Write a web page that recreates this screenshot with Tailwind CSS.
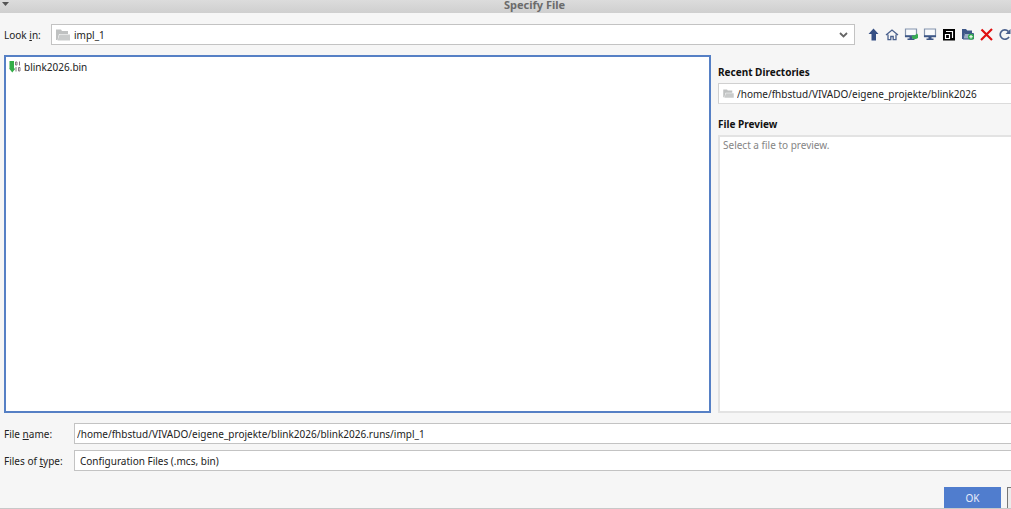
<!DOCTYPE html>
<html lang="en">
<head>
<meta charset="utf-8">
<title>Specify File</title>
<script src="https://cdn.jsdelivr.net/npm/@tailwindcss/browser@4"></script>
</head>
<body class="flex h-screen flex-col overflow-hidden border-b border-[#c8c8c8] bg-[#f6f6f6] font-['Noto_Sans',sans-serif] text-[10px] leading-4 text-[#222]">
  <header class="flex h-[13px] shrink-0 items-start bg-linear-to-b from-[#dcdcdc] to-[#cfcfcf]">
    <button aria-label="Window menu" class="h-2 w-[58px] shrink-0">
      <svg class="ml-[2px] h-2 w-2" viewBox="0 0 8 8"><path d="M0 2h7L3.500 6z" fill="#555"/></svg>
    </button>
    <h1 class="flex-1 text-center text-[11px] leading-[9px] font-bold text-[#6b6b6b]">Specify File</h1>
  </header>

  <div class="mt-[11px] flex h-[21px] shrink-0 items-center pl-1">
    <label for="look" class="w-[47px] shrink-0 whitespace-nowrap">Look <u>i</u>n:</label>
    <div class="grid h-full flex-1 items-center">
      <select id="look" class="col-start-1 row-start-1 h-full w-full appearance-none border border-[#c3c3c3] bg-white pl-[22px]">
        <option>impl_1</option>
      </select>
      <svg class="pointer-events-none col-start-1 row-start-1 ml-[5px] h-3 w-[14px]" viewBox="0 0 14 12"><path d="M0 .500h5l1 1.500h6V5H3L1.500 11H0z" fill="#bfc1c1"/><path d="M3.500 5.500H14V11.500H1.500z" fill="#c9cbcb"/></svg>
      <svg class="pointer-events-none col-start-1 row-start-1 mr-[7px] h-[6px] w-[9px] justify-self-end" viewBox="0 0 9 6"><path d="M1 1l3.500 3.500L8 1" fill="none" stroke="#666" stroke-width="1.800"/></svg>
    </div>
    <nav aria-label="Folder tools" class="-mr-[2px] ml-[11px] flex shrink-0 gap-[5px]">
      <button aria-label="Up one level"><svg class="h-[14px] w-[14px]" viewBox="0 0 14 14"><path d="M7.500 .500L12.500 6H10v6.500H5.500V6H2.500z" fill="#354f84"/></svg></button>
      <button aria-label="Home"><svg class="h-[14px] w-[14px]" viewBox="0 0 14 14"><path d="M1 7l6-5L13 7M3 6.500v5.200h2.800V8.500h2.400v3.200H11V6.500" fill="none" stroke="#4a608d" stroke-width="1.300"/></svg></button>
      <button aria-label="Desktop"><svg class="h-[14px] w-[14px]" viewBox="0 0 14 14"><path d="M1.500 1h11v7.300h-11z" fill="#f8fafc" stroke="#8494ad" stroke-width="1.200"/><path d="M1 7.300h12v2H1zM5.500 9h3v2h-3zM3.500 10.500h7V12h-7z" fill="#3d5787"/><path d="M7.500 8.500L9 7l1.200 1L13 5.500l1 1.200v3.300L12 11H9z" fill="#36ad52"/></svg></button>
      <button aria-label="Computer"><svg class="h-[14px] w-[14px]" viewBox="0 0 14 14"><path d="M1.500 1h11v7.300h-11z" fill="#f8fafc" stroke="#8494ad" stroke-width="1.200"/><path d="M1 7.300h12v2H1zM5.500 9h3v2h-3zM3.500 10.500h7V12h-7z" fill="#3d5787"/></svg></button>
      <button aria-label="Project directory"><svg class="h-[14px] w-[14px]" viewBox="0 0 14 14"><path d="M1 1h12v11.500H1z" fill="#000"/><path d="M4 3.500h6.500V10M3.500 10.500v-4H7.500v4z" fill="none" stroke="#fff" stroke-width="1.200"/></svg></button>
      <button aria-label="New folder"><svg class="h-[14px] w-[14px]" viewBox="0 0 14 14"><path d="M1 1h4l1.200 1.500H11V5H3.500L2 11H1z" fill="#3d5787"/><path d="M3.500 5.500h9v5.500H2z" fill="#9cacc4" stroke="#3d5787"/><circle cx="10" cy="8.800" r="3" fill="#2fab4d"/><path d="M10 7v3.600M8.200 8.800h3.600" stroke="#fff" stroke-width="1.100"/></svg></button>
      <button aria-label="Delete"><svg class="h-[14px] w-[14px]" viewBox="0 0 14 14"><path d="M1.500 1.500L12 12M12 1L1 12" stroke="#e01010" stroke-width="2.200"/></svg></button>
      <button aria-label="Refresh"><svg class="h-[14px] w-[14px]" viewBox="0 0 14 14"><path d="M9.300 3.300A4.700 4.700 0 1 0 10 8.800" fill="none" stroke="#4a608d" stroke-width="1.700"/><path d="M11.500 1v5H6.500z" fill="#4a608d"/></svg></button>
    </nav>
  </div>

  <main class="mt-[10px] flex min-h-0 flex-1 gap-[7px] pl-1">
    <ul aria-label="Files" class="flex-1 border-2 border-[#5680c5] bg-white px-[3px] py-[2px]">
      <li class="flex items-center gap-[3px]">
        <svg class="h-3 w-3" viewBox="0 0 12 12"><path d="M.5 0H5v7.500h1.500L3.300 11.500 0 7.500h.5z" fill="#35ad48"/><path d="M6.500 1h1.500v3H6.500zM10.500 .500v4M7 6v4.500M9.500 6.500h1.500v3.500H9.500z" fill="none" stroke="#7a6975" stroke-width=".9"/></svg>
        <span>blink2026.bin</span>
      </li>
    </ul>
    <aside class="flex w-[293px] shrink-0 flex-col">
      <h2 class="mt-[9px] font-bold text-[#111]"><label for="recent">Recent Directories</label></h2>
      <div class="mt-[3px] grid h-[21px] shrink-0 items-center">
        <select id="recent" class="col-start-1 row-start-1 h-full w-full appearance-none border-y border-l border-t-[#d0d0d0] border-l-[#d0d0d0] border-b-[#dcdcdc] bg-white pl-[18px]">
          <option>/home/fhbstud/VIVADO/eigene_projekte/blink2026</option>
        </select>
        <svg class="pointer-events-none col-start-1 row-start-1 ml-[5px] h-[9px] w-[11px]" viewBox="0 0 14 12"><path d="M0 .500h5l1 1.500h6V5H3L1.500 11H0z" fill="#bfc1c1"/><path d="M3.500 5.500H14V11.500H1.500z" fill="#c9cbcb"/></svg>
      </div>
      <h2 class="mt-3 font-bold text-[#111]">File Preview</h2>
      <div class="mt-[3px] flex-1 border-y-2 border-l-2 border-[#e3e3e3] bg-white pl-[3px] text-[#858585]">Select a file to preview.</div>
    </aside>
  </main>

  <form class="shrink-0 pl-1">
    <div class="mt-[10px] flex h-[21px] items-center">
      <label for="name" class="w-[70px] shrink-0 whitespace-nowrap">File <u>n</u>ame:</label>
      <input id="name" value="/home/fhbstud/VIVADO/eigene_projekte/blink2026/blink2026.runs/impl_1" class="h-full min-w-0 flex-1 border-y border-l border-[#c3c3c3] bg-white pl-[2px]">
    </div>
    <div class="mt-[6px] flex h-[21px] items-center">
      <label for="type" class="w-[70px] shrink-0 whitespace-nowrap">Files of <u>t</u>ype:</label>
      <select id="type" class="h-full min-w-0 flex-1 appearance-none border-y border-l border-[#c3c3c3] bg-white pl-[5px]">
        <option>Configuration Files (.mcs, bin)</option>
      </select>
    </div>
    <div class="mt-4 flex h-[21px] justify-end gap-[6px]">
      <button type="button" class="w-[57px] bg-[#507dce] text-[#e8eefa]">OK</button>
      <button type="button" aria-label="Cancel" class="w-1 border-t border-l border-[#777] bg-[#ececec]"></button>
    </div>
  </form>
</body>
</html>
